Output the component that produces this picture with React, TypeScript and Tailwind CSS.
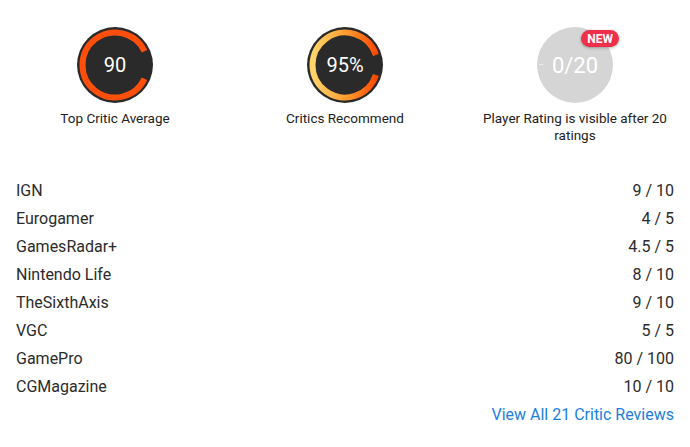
import React from "react";

function arcPath(cx: number, cy: number, r: number, startDeg: number, endDeg: number) {
  const toXY = (d: number) => {
    const a = (d * Math.PI) / 180;
    return [cx + r * Math.cos(a), cy + r * Math.sin(a)];
  };
  const [x1, y1] = toXY(startDeg);
  const [x2, y2] = toXY(endDeg);
  const large = endDeg - startDeg > 180 ? 1 : 0;
  return `M ${x1} ${y1} A ${r} ${r} 0 ${large} 1 ${x2} ${y2}`;
}

function Ring({ value, gap, gradient }: { value: string; gap: number; gradient?: boolean }) {
  const id = "g" + value.replace(/[^0-9]/g, "");
  return (
    <div className="relative w-[76px] h-[76px]">
      <svg width="76" height="76" viewBox="0 0 76 76" className="absolute inset-0">
        <defs>
          <linearGradient id={id} x1="0" y1="0" x2="1" y2="0">
            <stop offset="0%" stopColor="#ffd56a" />
            <stop offset="55%" stopColor="#ff9a2e" />
            <stop offset="100%" stopColor="#ff4a00" />
          </linearGradient>
        </defs>
        <circle cx="38" cy="38" r="38" fill="#2a2a2a" />
        <path
          d={arcPath(38, 38, 32.5, gap, 360 - gap)}
          fill="none"
          stroke={gradient ? `url(#${id})` : "#ff4f0a"}
          strokeWidth="6"
        />
      </svg>
      <div className="absolute inset-0 flex items-center justify-center text-white text-[20px] font-['Roboto',sans-serif]">
        {value}
      </div>
    </div>
  );
}

const rows: [string, string][] = [
  ["IGN", "9 / 10"],
  ["Eurogamer", "4 / 5"],
  ["GamesRadar+", "4.5 / 5"],
  ["Nintendo Life", "8 / 10"],
  ["TheSixthAxis", "9 / 10"],
  ["VGC", "5 / 5"],
  ["GamePro", "80 / 100"],
  ["CGMagazine", "10 / 10"],
];

export default function App() {
  return (
    <div className="w-[690px] h-[447px] bg-white font-['Roboto',sans-serif] text-[#222]">
      <div className="grid grid-cols-3 pt-[27px]">
        <div className="flex flex-col items-center">
          <Ring value="90" gap={25} />
          <div className="mt-[7px] text-[13.5px] leading-[17px] text-center">Top Critic Average</div>
        </div>
        <div className="flex flex-col items-center">
          <Ring value="95%" gap={18} gradient />
          <div className="mt-[7px] text-[13.5px] leading-[17px] text-center">Critics Recommend</div>
        </div>
        <div className="flex flex-col items-center">
          <div className="relative w-[76px] h-[76px]">
            <div className="absolute inset-0 rounded-full bg-[#d5d5d5]" />
            <div className="absolute left-[2px] top-[37px] w-[4px] h-[1px] bg-[#ececec]" />
            <div className="absolute inset-0 flex items-center justify-center text-white text-[22px]">0/20</div>
            <div className="absolute right-[-6px] top-[3px] rounded-full bg-[#f0304a] px-[6px] h-[17px] flex items-center text-white text-[12px] font-bold leading-none shadow-[0_1px_3px_rgba(0,0,0,0.3)]">
              NEW
            </div>
          </div>
          <div className="mt-[7px] text-[13.5px] leading-[17px] text-center w-[200px]">
            Player Rating is visible after 20 ratings
          </div>
        </div>
      </div>
      <div className="px-[16px] mt-[33px]">
        {rows.map(([name, score]) => (
          <div key={name} className="flex justify-between h-[28px] items-center text-[16px] text-[#2b2b2b]">
            <span>{name}</span>
            <span>{score}</span>
          </div>
        ))}
        <div className="flex justify-end h-[28px] items-center text-[16px] text-[#1a80e0]">
          View All 21 Critic Reviews
        </div>
      </div>
    </div>
  );
}
